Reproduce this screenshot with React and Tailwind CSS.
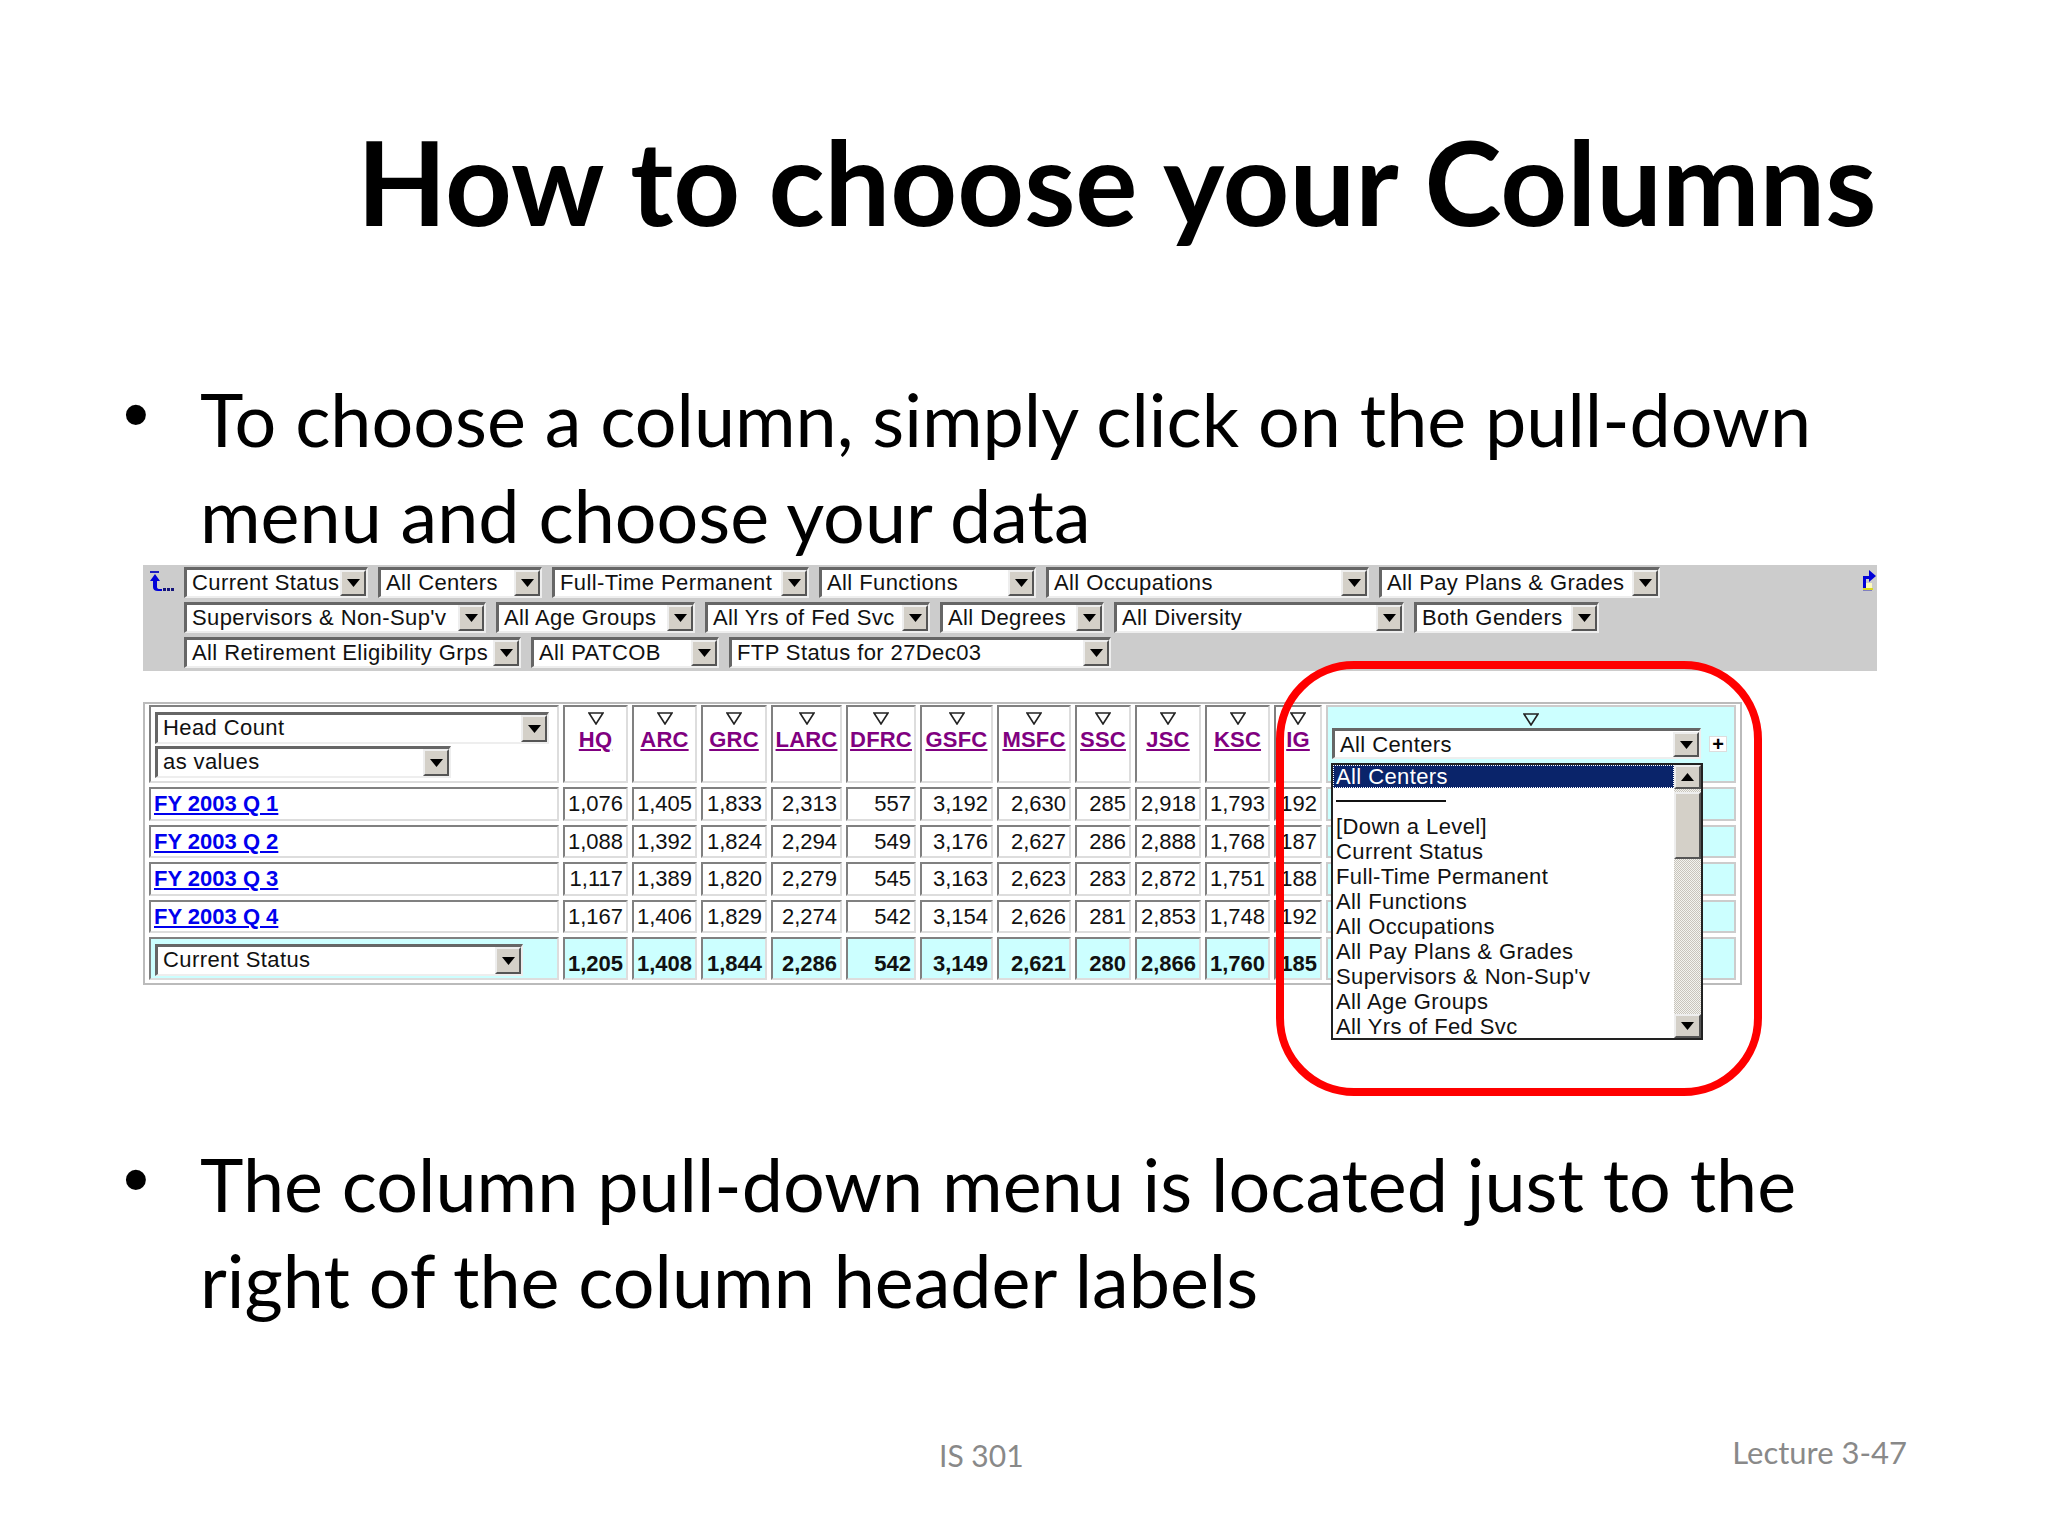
const LATO = "font-['Lato',sans-serif]";

const Arrow = ({ up }) => (
  <svg width="13" height="8" viewBox="0 0 13 8" className={up ? "rotate-180" : ""}>
    <path d="M0 0h13L6.5 8z" fill="#000" />
  </svg>
);

const SelectBox = ({ label, className = "" }) => (
  <div
    className={
      "flex shrink-0 border-2 border-t-[3px] border-l-[3px] border-t-[#666] border-l-[#666] border-r-[#eee] border-b-[#eee] bg-white " +
      className
    }
  >
    <span className="flex-1 overflow-hidden whitespace-nowrap pl-[5px] text-[22px] leading-[26px] tracking-[0.4px] text-[#111]">
      {label}
    </span>
    <span className="flex w-[26px] shrink-0 items-center justify-center border-2 border-t-[#eee] border-l-[#eee] border-r-[#555] border-b-[#555] bg-[#d4d0c8]">
      <Arrow />
    </span>
  </div>
);

const DownMark = () => (
  <svg width="16" height="13" viewBox="0 0 16 13" className="mx-auto block">
    <path d="M1 1h14L8 12z" fill="none" stroke="#222" strokeWidth="1.6" />
  </svg>
);

const columns = ["HQ", "ARC", "GRC", "LARC", "DFRC", "GSFC", "MSFC", "SSC", "JSC", "KSC", "IG"];

const rows = [
  { name: "FY 2003 Q 1", values: ["1,076", "1,405", "1,833", "2,313", "557", "3,192", "2,630", "285", "2,918", "1,793", "192"] },
  { name: "FY 2003 Q 2", values: ["1,088", "1,392", "1,824", "2,294", "549", "3,176", "2,627", "286", "2,888", "1,768", "187"] },
  { name: "FY 2003 Q 3", values: ["1,117", "1,389", "1,820", "2,279", "545", "3,163", "2,623", "283", "2,872", "1,751", "188"] },
  { name: "FY 2003 Q 4", values: ["1,167", "1,406", "1,829", "2,274", "542", "3,154", "2,626", "281", "2,853", "1,748", "192"] },
];

const totals = ["1,205", "1,408", "1,844", "2,286", "542", "3,149", "2,621", "280", "2,866", "1,760", "185"];

const menuItems = [
  "[Down a Level]",
  "Current Status",
  "Full-Time Permanent",
  "All Functions",
  "All Occupations",
  "All Pay Plans & Grades",
  "Supervisors & Non-Sup'v",
  "All Age Groups",
  "All Yrs of Fed Svc",
];

const cell = "border-2 border-t-[#808080] border-l-[#808080] border-r-[#ddd] border-b-[#ddd]";

const Toolbar = () => (
  <div className="flex h-[106px] w-[1734px] bg-[#cccccc] pt-[2px]">
    <div className="w-[41px] shrink-0 pl-[7px] pt-[4px]">
      <svg width="24" height="21" viewBox="0 0 24 21">
        <path d="M0 0h9v2H0z" fill="#1c1cc0" />
        <path d="M5 3l5 7H7v6q0 2 3 2h2v2H8q-5 0-5-4v-6H0z" fill="#0000d8" />
        <path d="M13 17h3v3h-3zM17 17h3v3h-3zM21 17h3v3h-3z" fill="#14147a" />
      </svg>
    </div>
    <div className="flex flex-col gap-[4px]">
      <div className="flex gap-[10px]">
        <SelectBox label="Current Status" className="w-[184px]" />
        <SelectBox label="All Centers" className="w-[164px]" />
        <SelectBox label="Full-Time Permanent" className="w-[257px]" />
        <SelectBox label="All Functions" className="w-[217px]" />
        <SelectBox label="All Occupations" className="w-[323px]" />
        <SelectBox label="All Pay Plans & Grades" className="w-[281px]" />
      </div>
      <div className="flex gap-[10px]">
        <SelectBox label="Supervisors & Non-Sup'v" className="w-[302px]" />
        <SelectBox label="All Age Groups" className="w-[199px]" />
        <SelectBox label="All Yrs of Fed Svc" className="w-[225px]" />
        <SelectBox label="All Degrees" className="w-[164px]" />
        <SelectBox label="All Diversity" className="w-[290px]" />
        <SelectBox label="Both Genders" className="w-[185px]" />
      </div>
      <div className="flex gap-[10px]">
        <SelectBox label="All Retirement Eligibility Grps" className="w-[337px]" />
        <SelectBox label="All PATCOB" className="w-[188px]" />
        <SelectBox label="FTP Status for 27Dec03" className="w-[382px]" />
      </div>
    </div>
    <div className="ml-auto pr-[1px] pt-[3px]">
      <svg width="14" height="22" viewBox="0 0 14 22">
        <path d="M4 13h6v5H4z" fill="#fdfbc0" />
        <path d="M7 0l7 6-7 6V9H4v9H1V6h6z" fill="#0000d8" />
        <path d="M1 18h10v2H1z" fill="#d8d820" />
        <path d="M1 20h9v1H1z" fill="#8080c0" />
      </svg>
    </div>
  </div>
);

const DataTable = () => (
  <div className="mt-[31px] w-[1599px] border-2 border-[#bbb] px-[4px] pb-[3px] pt-[1px]">
    <div className="grid grid-cols-[410px_65px_65px_66px_71px_70px_73px_74px_56px_66px_65px_48px_410px] grid-rows-[78px_34px_33px_34px_33px_43px] gap-[4px] text-[22px] leading-[28px] text-[#111]">
      <div className={cell + " flex flex-col gap-[2px] px-[4px] pt-[5px]"}>
        <SelectBox label="Head Count" className="h-[32px] w-[394px]" />
        <SelectBox label="as values" className="h-[32px] w-[296px]" />
      </div>
      {columns.map((name) => (
        <div key={name} className={cell + " pt-[5px] text-center"}>
          <DownMark />
          <div className="mt-[3px] text-[22px] font-bold leading-[24px] tracking-[0.2px] text-[#800080] underline">{name}</div>
        </div>
      ))}
      <div className="border-2 border-[#ccc] bg-[#ccffff] pt-[6px]">
        <DownMark />
      </div>

      {rows.map((row) => (
        <div key={row.name} className="contents">
          <div className={cell + " px-[3px] pt-[1px] font-bold text-[#0000ee] underline"}>{row.name}</div>
          {row.values.map((value, i) => (
            <div key={i} className={cell + " pr-[3px] pt-[1px] text-right"}>{value}</div>
          ))}
          <div className="border-2 border-[#ccc] bg-[#ccffff]" />
        </div>
      ))}

      <div className={cell + " bg-[#ccffff] px-[4px] pt-[5px]"}>
        <SelectBox label="Current Status" className="h-[32px] w-[368px]" />
      </div>
      {totals.map((value, i) => (
        <div key={i} className={cell + " bg-[#ccffff] pr-[3px] pt-[11px] text-right font-bold"}>{value}</div>
      ))}
      <div className="border-2 border-[#ccc] bg-[#ccffff]" />
    </div>
  </div>
);

const PullDown = () => (
  <div className="absolute left-[1188px] top-[163px] w-[372px]">
    <div className="flex items-center gap-[8px] pl-[1px]">
      <SelectBox label="All Centers" className="h-[31px] w-[369px] pt-[1px]" />
      <span className="flex h-[16px] w-[18px] shrink-0 items-center justify-center border border-[#ddd] bg-white text-[20px] font-bold leading-none">+</span>
    </div>
    <div className="mt-[4px] flex h-[277px] border-2 border-[#222] bg-white text-[22px] leading-[25px] tracking-[0.4px] text-[#111]">
      <div className="flex-1">
        <div className="border border-dotted border-white bg-[#0a246a] pl-[2px] leading-[21px] text-white">All Centers</div>
        <div className="h-[26px] pl-[3px] pt-[12px]">
          <div className="h-[2px] w-[110px] bg-[#111]" />
        </div>
        {menuItems.map((item) => (
          <div key={item} className="whitespace-nowrap pl-[3px]">{item}</div>
        ))}
      </div>
      <div className="flex w-[27px] shrink-0 flex-col bg-[repeating-conic-gradient(#c8c4bc_0%_25%,#f4f4f0_0%_50%)] bg-[length:2px_2px]">
        <div className="flex h-[24px] items-center justify-center border-2 border-t-[#eee] border-l-[#eee] border-r-[#555] border-b-[#555] bg-[#d4d0c8]">
          <Arrow up />
        </div>
        <div className="mt-[3px] h-[67px] border-2 border-t-[#eee] border-l-[#eee] border-r-[#555] border-b-[#555] bg-[#d4d0c8]" />
        <div className="mt-auto flex h-[24px] items-center justify-center border-2 border-t-[#eee] border-l-[#eee] border-r-[#555] border-b-[#555] bg-[#d4d0c8]">
          <Arrow />
        </div>
      </div>
    </div>
  </div>
);

const Bullet = ({ children }) => (
  <div className="flex text-[73.7px] leading-[96px] text-black">
    <span className="h-[96px] w-[77px] shrink-0 font-['Liberation_Sans',sans-serif] leading-[88px]">•</span>
    <p>{children}</p>
  </div>
);

const App = () => (
  <div className={"flex h-[1536px] w-[2048px] flex-col overflow-hidden bg-white " + LATO}>
    <h1 className="pl-[357px] pt-[113px] text-[116.5px] font-bold leading-[136px] text-black">
      How to choose your Columns
    </h1>
    <div className="mt-[122px] pl-[123px]">
      <Bullet>
        To choose a column, simply click on the pull-down
        <br />
        menu and choose your data
      </Bullet>
    </div>
    <div className="relative ml-[143px] mt-[2px] font-['Liberation_Sans',sans-serif]">
      <Toolbar />
      <DataTable />
      <PullDown />
      <div className="absolute left-[1133px] top-[96px] h-[435px] w-[486px] rounded-[78px] border-[8px] border-[#ff0000]" />
    </div>
    <div className="mt-[151px] pl-[123px]">
      <Bullet>
        The column pull-down menu is located just to the
        <br />
        right of the column header labels
      </Bullet>
    </div>
    <div className="mt-[104px] flex items-start leading-[40px] text-[#898989]">
      <span className="ml-[939px] mt-[3px] text-[30px]">IS 301</span>
      <span className="ml-auto mr-[141px] text-[31px]">Lecture 3-47</span>
    </div>
  </div>
);

export default App;
